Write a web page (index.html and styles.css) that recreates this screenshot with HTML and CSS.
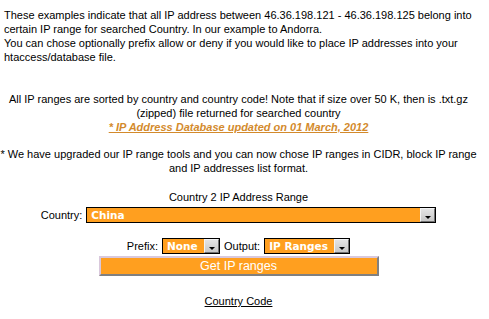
FILE: index.html
```html
<!DOCTYPE html>
<html lang="en">
<head>
  <meta charset="UTF-8" />
  <title>Country 2 IP Address Range</title>
  <link rel="stylesheet" href="styles.css">
</head>
<body>

<div class="page">
  <p class="intro">
    These examples indicate that all IP address between 46.36.198.121 - 46.36.198.125 belong into certain IP range for searched Country. In our example to Andorra.<br>
    You can chose optionally prefix allow or deny if you would like to place IP addresses into your htaccess/database file.
  </p>

  <p class="note">
    All IP ranges are sorted by country and country code! Note that if size over 50 K, then is .txt.gz (zipped) file returned for searched country<br>
    <a href="#" class="updated">* IP Address Database updated on 01 March, 2012</a>
  </p>

  <p class="note">
    * We have upgraded our IP range tools and you can now chose IP ranges in CIDR, block IP range and IP addresses list format.
  </p>

  <!-- Search form -->
  <form class="range-form">
    <div class="form-title">Country 2 IP Address Range</div>

    <div class="row">
      <label for="country">Country:</label>
      <span class="pick pick-country">
        <select id="country" name="country">
          <option>China</option>
        </select>
      </span>
    </div>

    <div class="row row-small">
      <label for="prefix">Prefix:</label>
      <span class="pick pick-prefix">
        <select id="prefix" name="prefix">
          <option>None</option>
        </select>
      </span>
      <label for="output">Output:</label>
      <span class="pick pick-output">
        <select id="output" name="output">
          <option>IP Ranges</option>
        </select>
      </span>
    </div>

    <button type="submit" class="btn-get">Get IP ranges</button>
  </form>

  <p class="footer-link"><a href="#">Country Code</a></p>
</div>

</body>
</html>
```

FILE: styles.css
```css
body {
  margin: 0;
  font-family: "Liberation Sans", Arial, sans-serif;
  font-size: 11px;
  line-height: 14px;
  color: #000;
  background: #fff;
}

.page {
  width: 477px;
  padding: 8px 0;
}

p {
  margin: 0;
}

.intro {
  padding: 0 4px;
  margin-bottom: 28px;
}

.note {
  text-align: center;
  margin-bottom: 13px;
}

.updated {
  color: #d38a2c;
  font-weight: bold;
  font-style: italic;
}

.range-form {
  display: flex;
  flex-direction: column;
  align-items: center;
  margin-top: 15px;
}

.form-title {
  margin-bottom: 3px;
}

.row {
  display: flex;
  align-items: center;
  gap: 4px;
  margin-bottom: 15px;
}

.row-small {
  margin-bottom: 2px;
}

.pick {
  position: relative;
  display: inline-block;
  height: 16px;
  box-sizing: border-box;
  border: 1px solid #000;
  background: #ff9f1f;
}

.pick select {
  appearance: none;
  -webkit-appearance: none;
  width: 100%;
  height: 14px;
  border: none;
  outline: none;
  background: transparent;
  padding: 0 0 0 4px;
  margin: 0;
  color: #fff;
  font-family: "DejaVu Sans", Verdana, sans-serif;
  font-weight: bold;
  font-size: 10.5px;
  line-height: 14px;
  display: block;
}

/* grey dropdown button, old windows look */
.pick::after {
  content: "";
  position: absolute;
  top: 0;
  right: 0;
  width: 15px;
  height: 14px;
  box-sizing: border-box;
  border: 1px solid;
  border-color: #f4f4f4 #707070 #707070 #f4f4f4;
  background: linear-gradient(#e4e4e4, #c8c8c8);
  pointer-events: none;
}

.pick::before {
  content: "";
  position: absolute;
  right: 4px;
  bottom: 3px;
  width: 0;
  height: 0;
  border-left: 3px solid transparent;
  border-right: 3px solid transparent;
  border-top: 3px solid #000;
  z-index: 1;
  pointer-events: none;
}

.pick-country {
  width: 350px;
}

.pick-prefix {
  width: 58px;
}

.pick-output {
  width: 86px;
}

.btn-get {
  width: 280px;
  height: 20px;
  box-sizing: border-box;
  border: 2px solid;
  border-color: #d9c8dc #808080 #808080 #d9c8dc;
  background: #ff9f1f;
  color: #fff;
  font-family: "Liberation Sans", Arial, sans-serif;
  font-size: 12.5px;
  padding: 0;
  cursor: pointer;
}

.footer-link {
  text-align: center;
  margin-top: 18px;
}

.footer-link a {
  color: #000;
}
```
